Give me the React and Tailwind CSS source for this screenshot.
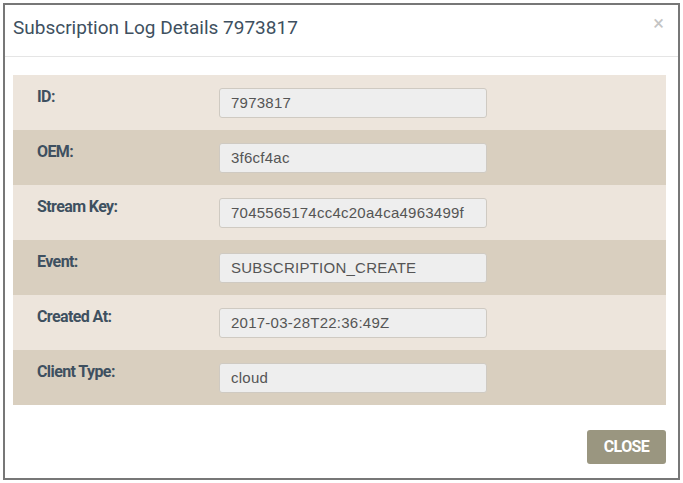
import React from "react";

const rows = [
  { label: "ID:", value: "7973817" },
  { label: "OEM:", value: "3f6cf4ac" },
  { label: "Stream Key:", value: "7045565174cc4c20a4ca4963499f" },
  { label: "Event:", value: "SUBSCRIPTION_CREATE" },
  { label: "Created At:", value: "2017-03-28T22:36:49Z" },
  { label: "Client Type:", value: "cloud" },
];

const App = () => {
  return (
    <div className="w-[683px] h-[483px] bg-white p-[3px] font-['Roboto',sans-serif]">
      <div className="h-full border-2 border-[#777] flex flex-col">
        {/* Header */}
        <div className="relative h-[52px] border-b border-[#e5e5e5] px-[8px] pt-[9px]">
          <h4 className="text-[19px] leading-[28px] text-[#3e5060]">
            Subscription Log Details 7973817
          </h4>
          <span className="absolute right-[14px] top-[8px] text-[20px] leading-none text-[#c4c4c4]">
            ×
          </span>
        </div>

        {/* Body */}
        <div className="pt-[18px] pl-[8px] pr-[12px]">
          {rows.map((row, i) => (
            <div
              key={row.label}
              className={`h-[55px] flex items-start ${
                i % 2 === 0 ? "bg-[#ede5dc]" : "bg-[#d9cfbf]"
              }`}
            >
              <div className="w-[206px] pl-[24px] pt-[10px] text-[16px] leading-[24px] font-bold text-[#3e5060] tracking-[-0.6px]">
                {row.label}
              </div>
              <div className="mt-[13px] w-[268px] h-[30px] rounded-[3px] border border-[#cfcac2] bg-[#eeeeee] pl-[11px] flex items-center overflow-hidden whitespace-nowrap font-['Liberation_Sans',Arial,sans-serif] text-[15px] tracking-[0.25px] text-[#555]">
                {row.value}
              </div>
            </div>
          ))}
        </div>

        {/* Footer */}
        <div className="flex-1 flex items-end justify-end pr-[12px] pb-[14px]">
          <button className="w-[79px] h-[34px] rounded-[3px] bg-[#9a9680] text-white text-[16px] font-bold tracking-[-0.6px]">
            CLOSE
          </button>
        </div>
      </div>
    </div>
  );
};

export default App;
